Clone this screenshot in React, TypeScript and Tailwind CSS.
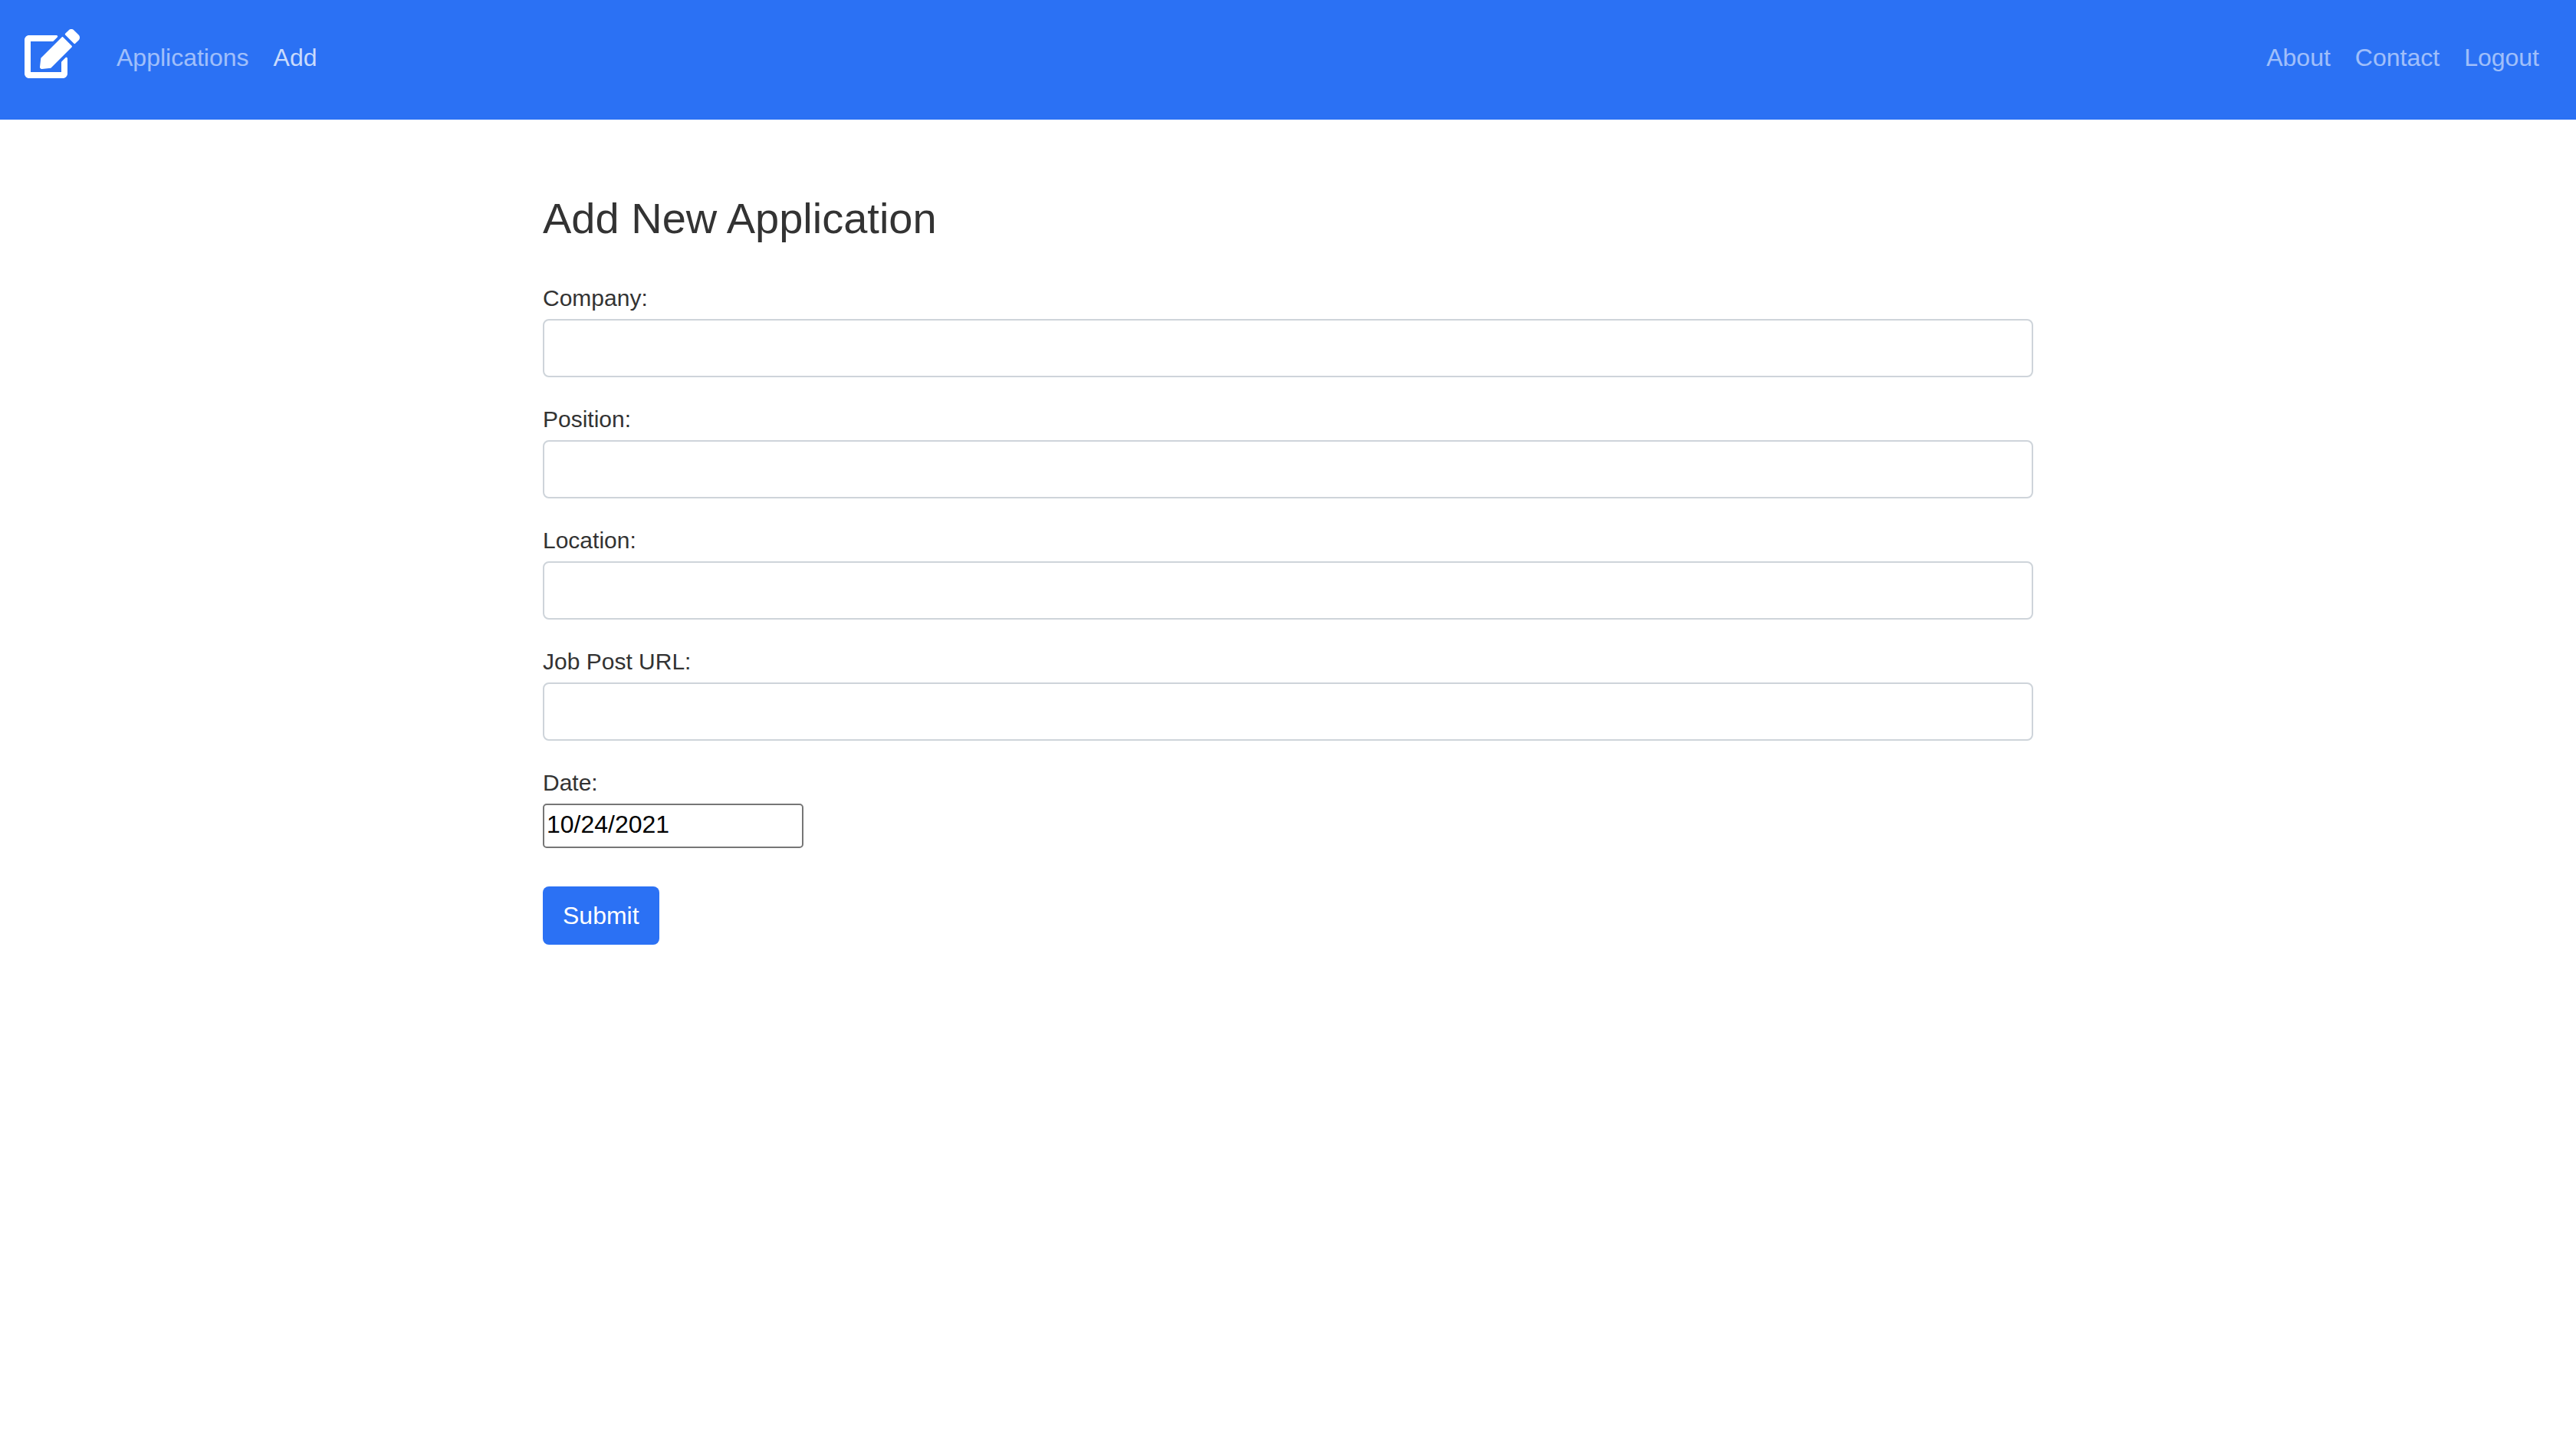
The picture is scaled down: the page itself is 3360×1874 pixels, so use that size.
import { FaEdit } from "react-icons/fa";

const fields = [
  { id: "company", label: "Company:" },
  { id: "position", label: "Position:" },
  { id: "location", label: "Location:" },
  { id: "url", label: "Job Post URL:" },
];

function NavLink({ label, active = false }: { label: string; active?: boolean }) {
  return (
    <a
      href="#"
      aria-current={active ? "page" : undefined}
      className={active ? "text-white/75" : "text-white/55"}
    >
      {label}
    </a>
  );
}

export default function App() {
  return (
    <div className="min-h-screen bg-white font-['Liberation_Sans',Arial,sans-serif] text-[32px] leading-[48px] text-[#333333]">
      <nav className="flex items-center bg-[#2b71f4] pt-[38px] pr-12 pb-[54px] pl-8">
        <a href="#" aria-label="Home" className="mr-12 text-white">
          <FaEdit className="h-16 w-[72px]" />
        </a>
        <div className="flex flex-1 items-center gap-8 pt-2.5">
          <NavLink label="Applications" />
          <NavLink label="Add" active />
        </div>
        <div className="flex items-center gap-8 pt-2.5">
          <NavLink label="About" />
          <NavLink label="Contact" />
          <NavLink label="Logout" />
        </div>
      </nav>
      <main className="mx-auto w-full max-w-[1992px] px-6 pt-24">
        <h1 className="mb-12 text-[56px] leading-[66px]">Add New Application</h1>
        <form onSubmit={(event) => event.preventDefault()}>
          {fields.map(({ id, label }) => (
            <div key={id} className="mb-8 flex flex-col gap-1">
              <label htmlFor={id} className="self-start text-[30px] leading-[46px]">
                {label}
              </label>
              <input
                id={id}
                type="text"
                className="h-[76px] w-full rounded-lg border-2 border-[#ced4da] bg-white px-6"
              />
            </div>
          ))}
          <div className="mb-[50px] flex flex-col gap-1">
            <label htmlFor="date" className="self-start text-[30px] leading-[46px]">
              Date:
            </label>
            <input
              id="date"
              type="text"
              defaultValue="10/24/2021"
              className="h-[58px] w-[340px] rounded-[5px] border-2 border-[#767676] bg-white px-[3px] pb-1 text-black"
            />
          </div>
          <button type="submit" className="h-[76px] rounded-lg bg-[#2b71f4] px-[26px] text-white">
            Submit
          </button>
        </form>
      </main>
    </div>
  );
}
